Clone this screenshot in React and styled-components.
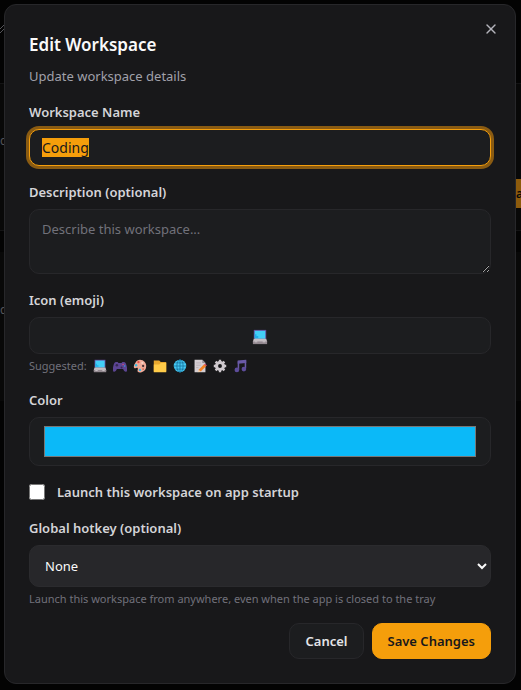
import React, { useEffect, useRef, useState } from 'react';
import styled, { createGlobalStyle } from 'styled-components';
import { X } from 'lucide-react';

const Laptop = () => (
  <>
    <path d="M2 1h14v10H2z" fill="#69489b" />
    <path d="M3 2h12v9H3z" fill="#42cff7" />
    <path d="M3 6h2v2h2v2H3z" fill="#20aee7" />
    <path d="M2 11h14l1 3v1H1v-1z" fill="#c4bdc2" />
    <path d="M1 14h16v3H1z" fill="#92888f" />
    <path d="M3 14h3v1H3zM12 14h3v1h-3z" fill="#d8d2d6" />
  </>
);

const Gamepad = () => (
  <>
    <path d="M4 4h2l1 1h4l1-1h2c2 0 3 2 4 7v4c-1 3-4 1-5-2H5c-1 3-4 5-5 2v-4c1-5 2-7 4-7z" fill="#5c4593" />
    <circle cx="5" cy="8" r="1.6" fill="#372852" />
    <circle cx="11" cy="11" r="1.3" fill="#372852" />
    <circle cx="13" cy="7" r="1" fill="#d44a7a" />
    <circle cx="15" cy="9" r="1" fill="#35a4db" />
  </>
);

const Palette = () => (
  <>
    <path d="M9 1c5 0 8 4 8 8 0 4-2 7-6 8-4 1-6-1-5-3 1-3-1-3-3-2-3 0-2-5 0-7 1-3 4-4 6-4z" fill="#efaa99" />
    <circle cx="7" cy="4" r="1.5" fill="#e84e45" />
    <circle cx="4" cy="8" r="1.5" fill="#37bde8" />
    <circle cx="9" cy="14" r="1.5" fill="#37bde8" />
    <circle cx="12" cy="5" r="1.4" fill="#f7d5c8" />
    <circle cx="13" cy="9" r="1.5" fill="#4a3538" />
    <circle cx="13" cy="13" r="1.2" fill="#d4674c" />
  </>
);

const Folder = () => (
  <>
    <path d="M1 2h7l2 2h7v12H1z" fill="#e7a72e" />
    <path d="M1 7h7l2-2h7v12H1z" fill="#ffcb49" />
  </>
);

const Globe = () => (
  <>
    <circle cx="9" cy="9" r="8" fill="#45c8f2" />
    <g fill="none" stroke="#14709c" strokeWidth="1">
      <ellipse cx="9" cy="9" rx="4" ry="8" />
      <path d="M9 1v16M1 9h16M3 5h12M3 13h12" />
    </g>
  </>
);

const Memo = () => (
  <>
    <path d="M2 1h10l4 4v12H2z" fill="#d4cdd2" />
    <path d="M12 1v4h4" fill="#928991" />
    <path d="M4 5h6M4 8h6M4 11h3" stroke="#b5adb3" />
    <path d="M7 14l7-7 3 2-7 7z" fill="#f58223" />
    <path d="M14 7l1-1 3 2-1 1z" fill="#e64968" />
    <path d="M7 14l3 2-4 1z" fill="#f2cea7" />
  </>
);

const Gear = () => (
  <>
    <circle cx="9" cy="9" r="4.5" fill="none" stroke="#cfc9ce" strokeWidth="4" />
    <path
      d="M9 1v3M9 14v3M1 9h3M14 9h3M3.3 3.3l2.2 2.2M12.5 12.5l2.2 2.2M3.3 14.7l2.2-2.2M12.5 5.5l2.2-2.2"
      stroke="#cfc9ce"
      strokeWidth="3"
    />
  </>
);

const Music = () => (
  <>
    <path d="M6 2l11-1v4L6 6z" fill="#6a5aa8" />
    <path d="M7 3v11M16 2v10" stroke="#6a5aa8" strokeWidth="2" />
    <ellipse cx="5" cy="14" rx="3" ry="3" fill="#5d4c9b" />
    <ellipse cx="14" cy="13" rx="3" ry="3" fill="#5d4c9b" />
  </>
);

const suggestions = [
  { name: 'Laptop', Art: Laptop },
  { name: 'Game', Art: Gamepad },
  { name: 'Art', Art: Palette },
  { name: 'Folder', Art: Folder },
  { name: 'Web', Art: Globe },
  { name: 'Notes', Art: Memo },
  { name: 'Settings', Art: Gear },
  { name: 'Music', Art: Music },
];

function App() {
  const nameRef = useRef(null);
  const [name, setName] = useState('Coding');
  const [color, setColor] = useState('#0bb9f8');
  const [icon, setIcon] = useState(0);
  const Chosen = suggestions[icon].Art;

  useEffect(() => {
    nameRef.current.focus();
    nameRef.current.select();
  }, []);

  return (
    <Page>
      <GlobalStyle />
      <Backdrop aria-hidden="true">
        <TopBar>
          <svg width="8" height="12" viewBox="0 0 8 12" stroke="#55555a" fill="none">
            <path d="M0 7l6-6M0 11l6-6" />
          </svg>
        </TopBar>
        <Panel>
          <PanelText>c</PanelText>
          <PanelActions>
            <PanelAction>a</PanelAction>
          </PanelActions>
        </Panel>
        <LowerPanel>
          <PanelText>de</PanelText>
        </LowerPanel>
      </Backdrop>

      <Dialog role="dialog" aria-modal="true" aria-labelledby="title">
        <Close type="button" aria-label="Close">
          <X size={16} strokeWidth={2} />
        </Close>

        <Header>
          <Title id="title">Edit Workspace</Title>
          <Subtitle>Update workspace details</Subtitle>
        </Header>

        <Form onSubmit={e => e.preventDefault()}>
          <Field>
            <Label htmlFor="name">Workspace Name</Label>
            <Input id="name" ref={nameRef} value={name} onChange={e => setName(e.target.value)} />
          </Field>

          <Field>
            <Label htmlFor="description">Description (optional)</Label>
            <TextArea id="description" placeholder="Describe this workspace..." />
          </Field>

          <Field>
            <Label htmlFor="icon">Icon (emoji)</Label>
            <IconBox>
              <Input id="icon" readOnly />
              <IconPreview viewBox="0 0 18 18">
                <Chosen />
              </IconPreview>
            </IconBox>
            <Suggested>
              Suggested:
              {suggestions.map(({ name, Art }, i) => (
                <Suggestion key={name} type="button" aria-label={name} onClick={() => setIcon(i)}>
                  <Emoji viewBox="0 0 18 18">
                    <Art />
                  </Emoji>
                </Suggestion>
              ))}
            </Suggested>
          </Field>

          <Field>
            <Label htmlFor="color">Color</Label>
            <ColorInput id="color" type="color" value={color} onChange={e => setColor(e.target.value)} />
          </Field>

          <CheckRow>
            <Checkbox id="startup" type="checkbox" />
            <Label htmlFor="startup">Launch this workspace on app startup</Label>
          </CheckRow>

          <Field>
            <Label htmlFor="hotkey">Global hotkey (optional)</Label>
            <Select id="hotkey">
              <option>None</option>
            </Select>
            <Hint>Launch this workspace from anywhere, even when the app is closed to the tray</Hint>
          </Field>

          <Footer>
            <Button type="button">Cancel</Button>
            <Button type="submit" $primary>Save Changes</Button>
          </Footer>
        </Form>
      </Dialog>
    </Page>
  );
}

const GlobalStyle = createGlobalStyle`
  *, *::before, *::after {
    box-sizing: border-box;
  }

  body {
    margin: 0;
    background: #030303;
  }

  body, button, input, textarea, select {
    font-family: "Noto Sans", "Open Sans", sans-serif;
    font-size: 13px;
  }
`;

const Page = styled.main`
  position: relative;
  min-height: 100vh;
  padding: 4px 5px 4px 4px;
  overflow: hidden;
`;

const Backdrop = styled.div`
  position: absolute;
  inset: 0;
`;

const TopBar = styled.div`
  height: 83px;
  padding-top: 20px;
  background: #030303;
`;

const Panel = styled.div`
  height: 148px;
  display: flex;
  flex-direction: column;
  justify-content: space-between;
  padding: 47px 0 22px;
  margin-bottom: 21px;
  background: #080808;
  border-top: 1px solid #131314;
  border-bottom: 1px solid #131314;
`;

const PanelText = styled.span`
  font-size: 12px;
  line-height: 20px;
  color: #55555a;
`;

const PanelActions = styled.div`
  display: flex;
  justify-content: flex-end;
`;

const PanelAction = styled.div`
  width: 5px;
  height: 29px;
  line-height: 29px;
  background: #8d5b0c;
  color: #080808;
  font-size: 12px;
  font-weight: 600;
`;

const LowerPanel = styled.div`
  height: 149px;
  padding-top: 48px;
  background: #080808;
`;

const Dialog = styled.section`
  position: relative;
  width: 100%;
  max-width: 512px;
  margin: 0 auto;
  padding: 24px;
  background: #18181a;
  border: 1px solid #27272a;
  border-radius: 12px;
`;

const Close = styled.button`
  position: absolute;
  top: 16px;
  right: 16px;
  display: flex;
  padding: 0;
  border: 0;
  background: none;
  color: #b4b4bc;
`;

const Header = styled.header`
  display: flex;
  flex-direction: column;
  gap: 5px;
  margin-bottom: 16px;
`;

const Title = styled.h2`
  margin: 0;
  font-size: 17px;
  line-height: 32px;
  font-weight: 600;
  color: #fafafa;
`;

const Subtitle = styled.p`
  margin: 0;
  line-height: 20px;
  color: #a1a1aa;
`;

const Form = styled.form`
  display: flex;
  flex-direction: column;
  gap: 16px;
`;

const Field = styled.div`
  display: flex;
  flex-direction: column;
`;

const Label = styled.label`
  line-height: 20px;
  font-weight: 600;
  color: #d4d4d8;
`;

const Input = styled.input`
  width: 100%;
  height: 37px;
  margin-top: 7px;
  padding: 8px 12px;
  background: #1c1d1f;
  border: 1px solid #27272a;
  border-radius: 10px;
  color: #fafafa;
  font-size: 14px;
  outline: none;

  &:focus {
    border-color: #f59e0b;
    box-shadow: 0 0 0 3px #8a5b12;
  }

  &::selection {
    background: #f59e0b;
    color: #18181b;
  }
`;

const TextArea = styled.textarea`
  width: 100%;
  height: 65px;
  margin-top: 7px;
  padding: 8px 12px;
  line-height: 22px;
  background: #1c1d1f;
  border: 1px solid #27272a;
  border-radius: 10px;
  color: #fafafa;
  color-scheme: dark;
  resize: vertical;

  &::placeholder {
    color: #71717a;
  }
`;

const IconBox = styled.div`
  position: relative;
`;

const IconPreview = styled.svg`
  position: absolute;
  left: calc(50% - 8px);
  bottom: 9px;
  width: 16px;
  height: 16px;
  pointer-events: none;
`;

const Suggested = styled.div`
  display: flex;
  align-items: center;
  gap: 6px;
  margin-top: 4px;
  font-size: 11px;
  line-height: 16px;
  color: #71717a;
`;

const Suggestion = styled.button`
  display: flex;
  padding: 0;
  border: 0;
  background: none;
`;

const Emoji = styled.svg`
  width: 14px;
  height: 14px;
`;

const ColorInput = styled.input`
  width: 100%;
  height: 49px;
  margin-top: 7px;
  padding: 4px 12px;
  background: #1c1d1f;
  border: 1px solid #27272a;
  border-radius: 10px;
`;

const CheckRow = styled.div`
  display: flex;
  align-items: center;
  gap: 12px;
`;

const Checkbox = styled.input`
  width: 16px;
  height: 16px;
  margin: 0;
`;

const Select = styled.select`
  width: 100%;
  height: 42px;
  margin-top: 7px;
  padding: 8px 0 8px 11px;
  background-color: #27272a;
  border: 1px solid #2b2b2e;
  border-radius: 10px;
  color: #fafafa;
`;

const Hint = styled.p`
  margin: 4px 0 0;
  font-size: 11px;
  line-height: 16px;
  color: #71717a;
`;

const Footer = styled.footer`
  display: flex;
  justify-content: flex-end;
  gap: 8px;
`;

const Button = styled.button`
  height: 36px;
  padding: 0 15px;
  border: 1px solid ${({ $primary }) => ($primary ? '#f59e0b' : '#27272a')};
  border-radius: 10px;
  background: ${({ $primary }) => ($primary ? '#f59e0b' : '#1c1d1f')};
  color: ${({ $primary }) => ($primary ? '#18181b' : '#e4e4e7')};
  font-weight: 600;
`;

export default App;
